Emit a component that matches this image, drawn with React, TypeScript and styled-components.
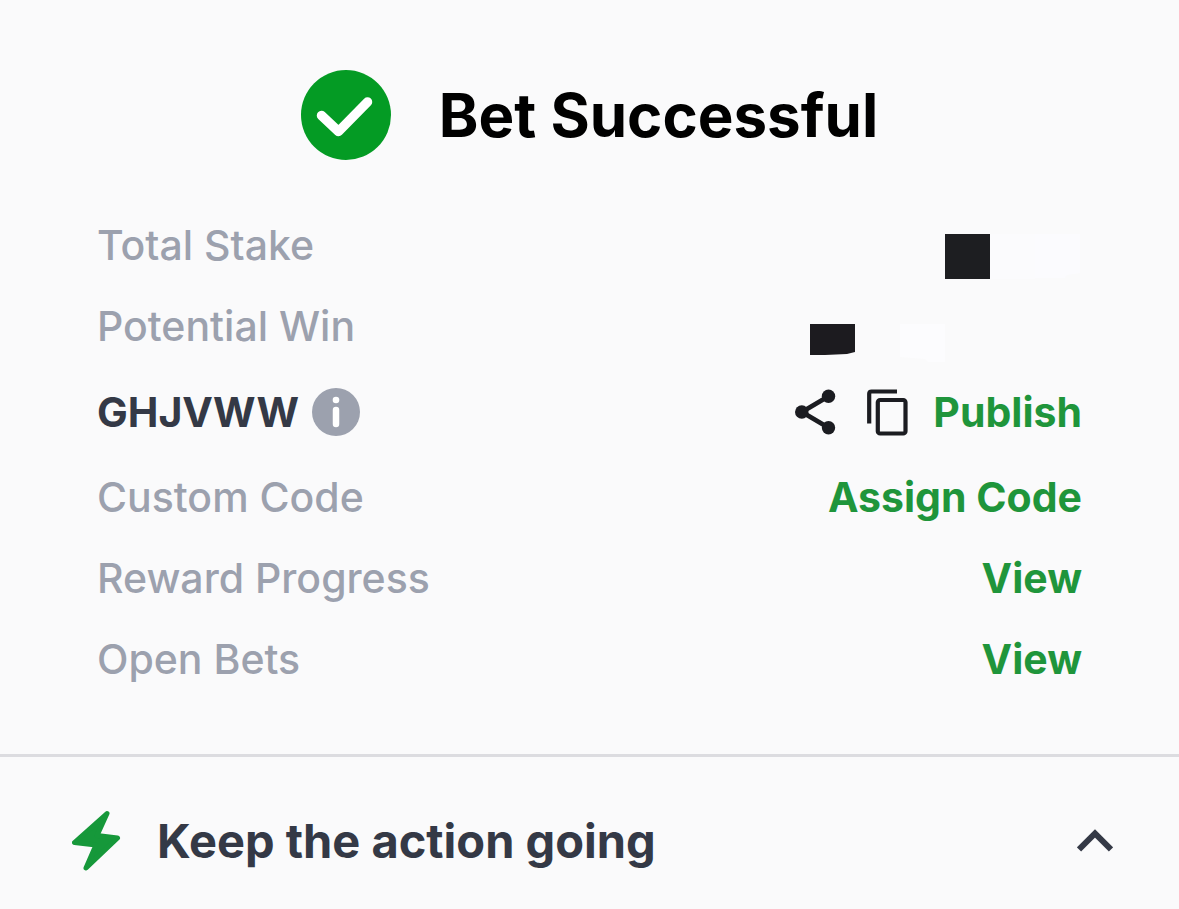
import React from "react";
import styled, { createGlobalStyle } from "styled-components";

const GlobalStyle = createGlobalStyle`
  * { box-sizing: border-box; }
  body {
    margin: 0;
    background: #fafafb;
    font-family: Inter, "Liberation Sans", sans-serif;
    color: #343946;
  }
  button { font: inherit; color: inherit; border: 0; padding: 0; background: none; cursor: pointer; }
  svg { display: block; flex: none; }
`;

const Header = styled.header`
  display: flex;
  align-items: center;
  justify-content: center;
  gap: 48px;
  padding-top: 70px;
`;

const Title = styled.h1`
  margin: 0;
  font-size: 60px;
  line-height: 90px;
  font-weight: 700;
  color: #000;
`;

const Details = styled.section`
  display: flex;
  flex-direction: column;
  gap: 30px;
  padding: 60px 97px 69px;
  font-size: 41px;
  line-height: 51px;
`;

const Row = styled.div<{ $tall?: boolean }>`
  display: flex;
  align-items: center;
  justify-content: space-between;
  height: ${(p) => (p.$tall ? 60 : 51)}px;
  white-space: nowrap;
`;

const Label = styled.span`
  font-weight: 500;
  color: #9ca1ae;
`;

const Code = styled.span`
  display: flex;
  align-items: center;
  gap: 13px;
  font-weight: 700;
`;

const Actions = styled.div`
  display: flex;
  align-items: center;
  color: #1b1c21;
`;

const IconButton = styled.button<{ $gap: number }>`
  display: flex;
  margin-right: ${(p) => p.$gap}px;
`;

const LinkButton = styled.button`
  && {
    font-weight: 700;
    color: #1f953b;
  }
`;

const HiddenAmount = styled.svg`
  overflow: visible;
`;

const More = styled.section`
  border-top: 3px solid #dcdce0;
`;

const MoreButton = styled.button`
  && {
    display: flex;
    align-items: center;
    width: 100%;
    padding: 50px 66px 34px 72px;
    font-size: 47px;
    line-height: 68px;
    font-weight: 700;
    text-align: left;
  }
`;

const MoreText = styled.span`
  flex: 1;
  padding-left: 36px;
`;

export default function App() {
  return (
    <main>
      <GlobalStyle />
      <Header>
        <svg width="90" height="90" viewBox="0 0 90 90" aria-hidden="true">
          <circle cx="45" cy="45" r="45" fill="#049b24" />
          <path d="M20.5 45.500 37.500 61.500 66.500 32" fill="none" stroke="#fff" strokeWidth="9.500" strokeLinecap="round" strokeLinejoin="round" />
        </svg>
        <Title>Bet Successful</Title>
      </Header>
      <Details>
        <Row>
          <Label>Total Stake</Label>
          <HiddenAmount width="137" height="51" viewBox="0 0 137 51" role="img" aria-label="Hidden stake">
            <path d="M0 14h45v45H0z" fill="#1d1e21" />
            <path d="M45 14h45v45H45z" fill="#fbfbfd" />
            <path d="M90 14h45v39l-13 2-2 3H90z" fill="#fbfbfe" />
          </HiddenAmount>
        </Row>
        <Row>
          <Label>Potential Win</Label>
          <HiddenAmount width="272" height="51" viewBox="0 0 272 51" role="img" aria-label="Hidden win">
            <path d="M0 23h45v28l-8 2-22 1H0z" fill="#1c1b1f" />
            <path d="M90 23h45v38h-17l-3-3-25-2z" fill="#fcfcfe" />
          </HiddenAmount>
        </Row>
        <Row $tall>
          <Code>
            GHJVWW
            <svg width="48" height="48" viewBox="0 0 48 48" aria-hidden="true">
              <circle cx="24" cy="24" r="24" fill="#9ca1ae" />
              <circle cx="24" cy="12" r="3.300" fill="#fff" />
              <path d="M24 22v14" stroke="#fff" strokeWidth="6.500" strokeLinecap="round" />
            </svg>
          </Code>
          <Actions>
            <IconButton $gap={31} aria-label="Share">
              <svg width="41" height="46" viewBox="0 0 41 46">
                <path d="M34 7 7 23 34 39" fill="none" stroke="currentColor" strokeWidth="4.800" />
                <circle cx="33.500" cy="7.200" r="6.700" fill="currentColor" />
                <circle cx="6.800" cy="23" r="6.800" fill="currentColor" />
                <circle cx="33.500" cy="38.700" r="6.700" fill="currentColor" />
              </svg>
            </IconButton>
            <IconButton $gap={25} aria-label="Copy">
              <svg width="41" height="47" viewBox="0 0 41 47" fill="none" stroke="currentColor" strokeWidth="4.200">
                <path d="M30 2.500H4.500q-2.300 0-2.300 2.300V34.500" />
                <rect x="10.800" y="11" width="27.700" height="33.500" rx="2.300" />
              </svg>
            </IconButton>
            <LinkButton>Publish</LinkButton>
          </Actions>
        </Row>
        <Row>
          <Label>Custom Code</Label>
          <LinkButton>Assign Code</LinkButton>
        </Row>
        <Row>
          <Label>Reward Progress</Label>
          <LinkButton>View</LinkButton>
        </Row>
        <Row>
          <Label>Open Bets</Label>
          <LinkButton>View</LinkButton>
        </Row>
      </Details>
      <More>
        <MoreButton aria-expanded="true">
          <svg width="49" height="62" viewBox="0 0 49 62" aria-hidden="true">
            <path d="M35 3.500 2.500 32.500 24 35 14 58 45.500 28 25 25.500z" fill="#16983a" stroke="#16983a" strokeWidth="5" strokeLinejoin="round" />
          </svg>
          <MoreText>Keep the action going</MoreText>
          <svg width="36" height="24" viewBox="0 0 36 24" aria-hidden="true">
            <path d="M2 20.500 18 4.500 34 20.500" fill="none" stroke="#343946" strokeWidth="6" />
          </svg>
        </MoreButton>
      </More>
    </main>
  );
}
